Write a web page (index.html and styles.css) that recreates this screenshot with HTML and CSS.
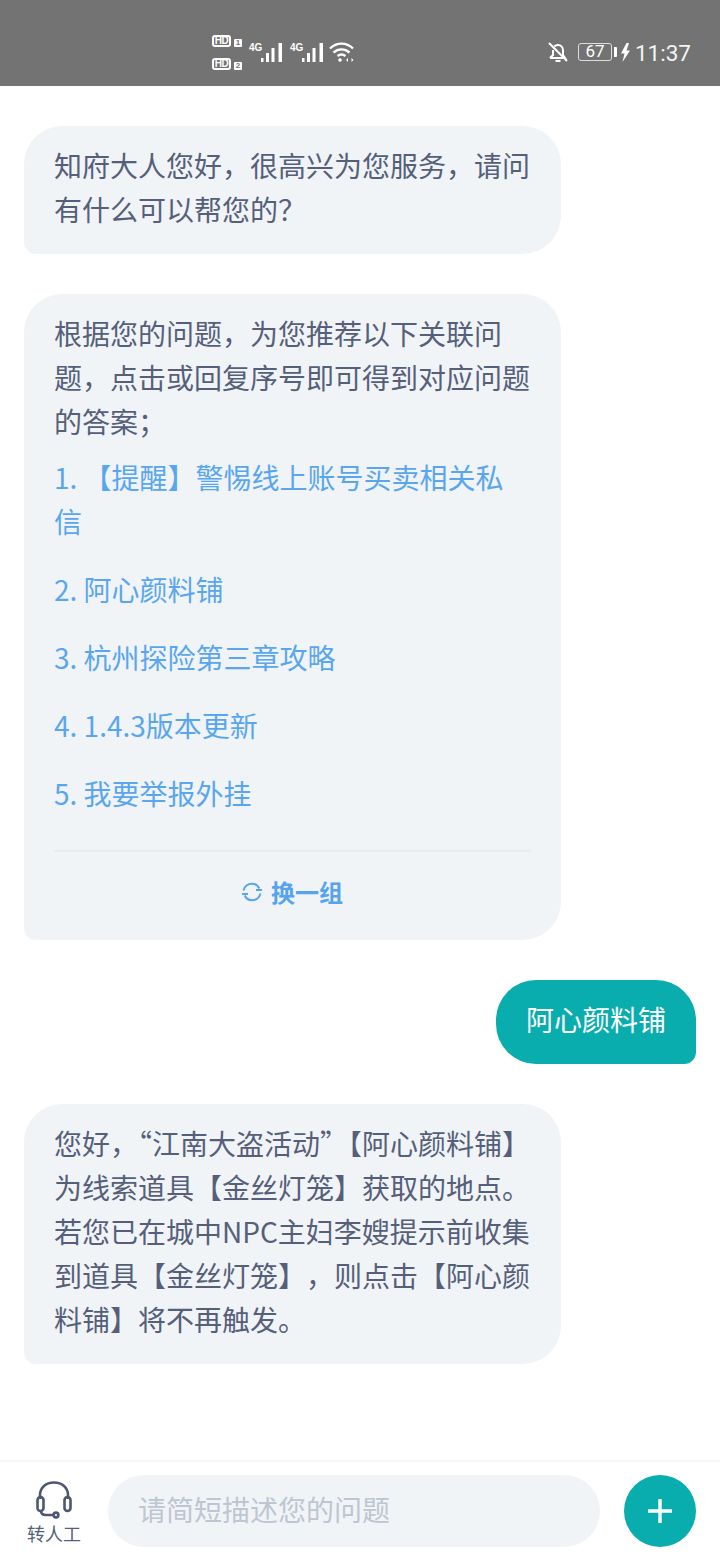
FILE: index.html
```html
<!DOCTYPE html>
<html lang="zh-CN">
<head>
    <meta charset="UTF-8">
    <title>客服</title>
    <link rel="stylesheet" href="styles.css">
</head>
<body>
<div class="status">
    <div class="status-left">
        <div class="hd-col">
            <div class="hd-row"><span class="hd">HD</span><span class="sim">1</span></div>
            <div class="hd-row"><span class="hd">HD</span><span class="sim">2</span></div>
        </div>
        <div class="signal">
            <span class="net">4G</span>
            <svg width="21" height="20" viewBox="0 0 21 20"><path d="M0 16h2.500v4H0zM5 11h3v9H5zM10.500 6h3v14h-3zM17.500 1H21v19h-3.500z" fill="#fff"/></svg>
        </div>
        <div class="signal">
            <span class="net">4G</span>
            <svg width="21" height="20" viewBox="0 0 21 20"><path d="M0 16h2.500v4H0zM5 11h3v9H5zM10.500 6h3v14h-3zM17.500 1H21v19h-3.500z" fill="#fff"/></svg>
        </div>
        <svg class="wifi" width="25" height="20" viewBox="0 0 25 20" fill="none" stroke="#fff" stroke-width="2.400">
            <path d="M1 6.500C7.500 0 17.500 0 24 6.500"/>
            <path d="M4.500 10.500c4.500-4.200 11.500-4.200 16 0"/>
            <path d="M8.500 14c2.500-2 5.500-2 8 0"/>
            <circle cx="11" cy="18" r="1.800" fill="#fff" stroke="none"/>
            <path d="M17 18l2-2v4zM24.500 18l-2-2v4z" fill="#fff" stroke="none"/>
        </svg>
    </div>
    <div class="status-right">
        <svg width="20" height="20" viewBox="0 0 20 20" fill="none" stroke="#fff" stroke-width="2">
            <path d="M2 16h15l-2-3V8.500c0-3-2-5.500-5-5.500-1.500 0-2.800.6-3.700 1.500M5 8v5l-3 3"/>
            <path d="M7.500 19h5M1 1l18 18"/>
        </svg>
        <div class="batt"><span class="batt-num">67</span></div>
        <span class="batt-tip"></span>
        <svg class="bolt" width="9" height="19" viewBox="0 0 9 19"><path d="M5.500 0L0 10.500h3.500L1.500 19 9 7.500H5.500L8 0z" fill="#fff"/></svg>
        <span class="time">11:37</span>
    </div>
</div>

<div class="chat">
    <div class="bubble">知府大人您好，很高兴为您服务，请问有什么可以帮您的？</div>

    <div class="bubble">
        <div>根据您的问题，为您推荐以下关联问题，点击或回复序号即可得到对应问题的答案；</div>
        <ul class="links">
            <li>1. 【提醒】警惕线上账号买卖相关私信</li>
            <li>2. 阿心颜料铺</li>
            <li>3. 杭州探险第三章攻略</li>
            <li>4. 1.4.3版本更新</li>
            <li>5. 我要举报外挂</li>
        </ul>
        <div class="swap">
            <svg width="20" height="20" viewBox="0 0 20 20" fill="none" stroke="#56a3ee" stroke-width="2">
                <path d="M1.500 8.500C2.500 4.500 6 1.800 10 1.800c3.200 0 6 1.700 7.300 4.700M18.500 11.500c-1 4-4.500 6.700-8.500 6.700-3.200 0-6-1.700-7.300-4.700"/>
                <path d="M14 8h6M0 12h6"/>
            </svg>
            <span>换一组</span>
        </div>
    </div>

    <div class="bubble mine">阿心颜料铺</div>

    <div class="bubble">您好，“江南大盗活动”【阿心颜料铺】为线索道具【金丝灯笼】获取的地点。若您已在城中NPC主妇李嫂提示前收集到道具【金丝灯笼】&#8288;，则点击【阿心颜料铺】将不再触发。</div>
</div>

<div class="footer">
    <div class="agent">
        <svg width="38" height="38" viewBox="0 0 38 38" fill="none" stroke="#4f5673" stroke-width="2.600">
            <path d="M5 18v-4C5 6.500 11 1.500 19 1.500S33 6.500 33 14v4"/>
            <rect x="2.500" y="16" width="6" height="14" rx="3"/>
            <rect x="29.500" y="16" width="6" height="14" rx="3"/>
            <path d="M6 30c0 2.500 2 4 5 4h7"/>
            <circle cx="21" cy="34" r="2.400"/>
        </svg>
        <span>转人工</span>
    </div>
    <div class="input">请简短描述您的问题</div>
    <div class="plus">
        <svg width="24" height="24" viewBox="0 0 24 24"><path d="M12 1v22M1 12h22" stroke="#fff" stroke-width="3.400" stroke-linecap="round"/></svg>
    </div>
</div>
</body>
</html>
```

FILE: styles.css
```css
* {
    padding: 0;
    margin: 0;
    box-sizing: border-box;
}

ul {
    list-style: none;
}

body {
    width: 720px;
    height: 1560px;
    background: #fff;
    font-family: "Noto Sans CJK SC", "Liberation Sans", sans-serif;
    display: flex;
    flex-direction: column;
    overflow: hidden;
}

.status {
    height: 86px;
    background: #737373;
    color: #fff;
    display: flex;
    justify-content: space-between;
    align-items: center;
    padding: 18px 29px 0 212px;
    flex-shrink: 0;
}

.status-left, .status-right {
    display: flex;
    align-items: center;
}

.hd-col {
    display: flex;
    flex-direction: column;
    gap: 11px;
    margin-right: 7px;
}

.hd-row {
    display: flex;
    align-items: flex-end;
    gap: 3px;
}

.hd {
    width: 19px;
    height: 12px;
    border: 2px solid #fff;
    color: #fff;
    border-radius: 3px;
    font: bold 10px/8px "Liberation Sans", sans-serif;
    letter-spacing: -0.500px;
    text-align: center;
}

.sim {
    width: 8px;
    height: 8px;
    background: #fff;
    color: #737373;
    border-radius: 1px;
    font: bold 8px/8px "Liberation Sans", sans-serif;
    text-align: center;
}

.signal {
    display: flex;
    align-items: flex-end;
    margin-right: 8px;
    height: 20px;
}

.signal + .wifi {
    margin-left: -2px;
}

.net {
    width: 12px;
    font: bold 10px/10px "Liberation Sans", sans-serif;
    align-self: flex-start;
    margin-top: 1px;
}

.status-right svg {
    flex-shrink: 0;
}

.batt {
    width: 34px;
    height: 18px;
    border: 1.500px solid #ddd;
    border-radius: 3px;
    margin-left: 10px;
    text-align: center;
}

.batt-num {
    display: block;
    font: 17px/15px Roboto, sans-serif;
}

.batt-tip {
    width: 3px;
    height: 10px;
    background: #fff;
    margin-left: 2px;
    border-radius: 0 1px 1px 0;
}

.bolt {
    margin-left: 4px;
}

.time {
    font: 22.500px/28px Roboto, sans-serif;
    margin-left: 5px;
    margin-top: 2px;
    color: #f4f4f4;
}

.chat {
    flex: 1;
    display: flex;
    flex-direction: column;
    align-items: flex-start;
    gap: 40px;
    padding: 40px 24px 0;
}

.bubble {
    width: 537px;
    padding: 17px 30px 23px;
    background: #f0f4f7;
    color: #565f7a;
    font-size: 28px;
    line-height: 44px;
    border-radius: 38px 38px 38px 12px;
}

.bubble.mine {
    width: 200px;
    align-self: flex-end;
    background: #09adad;
    color: #fff;
    border-radius: 40px 40px 12px 40px;
}

.links {
    margin-top: 12px;
    color: #5aa6ee;
}

.links li {
    margin-bottom: 24px;
}

.links li:last-child {
    margin-bottom: 0;
}

.swap {
    margin-top: 35px;
    margin-bottom: 3px;
    border-top: 2px solid #e8ecf0;
    padding-top: 18px;
    display: flex;
    justify-content: center;
    align-items: center;
    gap: 9px;
    color: #56a3ee;
    font-size: 24px;
    font-weight: bold;
}

.footer {
    height: 100px;
    border-top: 2px solid #f5f6f8;
    display: flex;
    align-items: center;
    padding: 0 24px;
    flex-shrink: 0;
}

.agent {
    width: 60px;
    padding-top: 2px;
    display: flex;
    flex-direction: column;
    align-items: center;
    color: #565f7a;
    font-size: 18px;
    line-height: 20px;
    gap: 4px;
}

.input {
    width: 492px;
    height: 72px;
    margin-left: 24px;
    background: #f0f4f7;
    border-radius: 36px;
    padding-left: 30px;
    color: #bfc5d1;
    font-size: 28px;
    line-height: 68px;
}

.plus {
    width: 72px;
    height: 72px;
    margin-left: 24px;
    border-radius: 50%;
    background: #09adad;
    display: flex;
    align-items: center;
    justify-content: center;
}
```
